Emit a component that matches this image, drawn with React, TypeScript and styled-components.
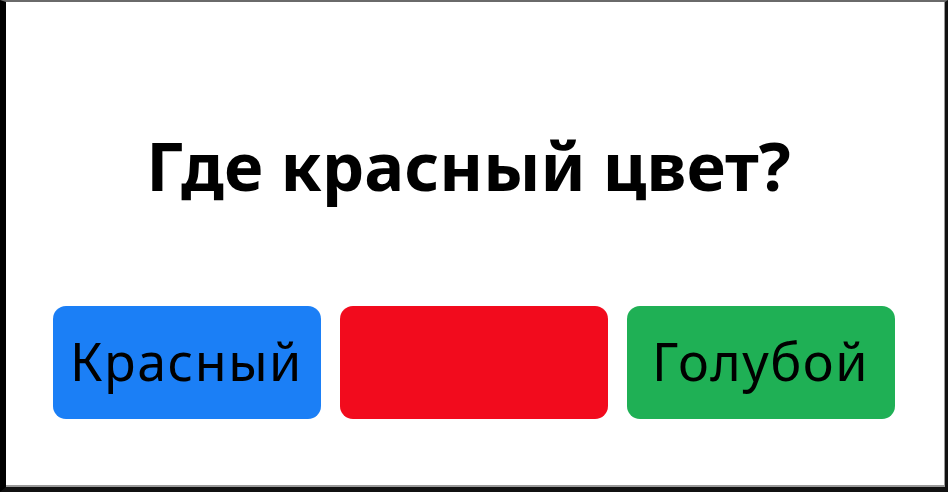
import React from "react";
import styled, { createGlobalStyle } from "styled-components";

const GlobalStyle = createGlobalStyle`
  html, body {
    margin: 0;
    padding: 0;
    background: #ffffff;
  }
  body {
    font-family: "Noto Sans", "Open Sans", sans-serif;
  }
`;

const options = [
  { label: "Красный", color: "#1b7ff6" },
  { label: "", color: "#f20b1d" },
  { label: "Голубой", color: "#1fb055" },
];

const App: React.FC = () => {
  return (
    <>
      <GlobalStyle />
      <Frame>
        <Question>Где красный цвет?</Question>
        <Answers>
          {options.map((option, i) => (
            <AnswerButton key={i} color={option.color}>
              {option.label}
            </AnswerButton>
          ))}
        </Answers>
      </Frame>
    </>
  );
};

export default App;

const Frame = styled.div`
  box-sizing: border-box;
  width: 948px;
  height: 492px;
  border-left: 6px solid #000;
  border-top: 2px solid #6a6a6a;
  border-right: 3px solid #111;
  border-bottom: 5px solid #111;
  box-shadow: inset -1px -2px 0 #9a9a9a;
  display: flex;
  flex-direction: column;
  align-items: center;
  padding-top: 120px;
`;

const Question = styled.h1`
  margin: 0 0 0 -14px;
  font-size: 67px;
  font-weight: 700;
  line-height: 86px;
  color: #000;
`;

const Answers = styled.div`
  display: flex;
  gap: 19px;
  margin-top: 98px;
  margin-left: -4px;
`;

const AnswerButton = styled.button<{ color: string }>`
  width: 268px;
  height: 113px;
  border: none;
  border-radius: 13px;
  background-color: ${(props) => props.color};
  color: #000;
  font-family: "Noto Sans", "Open Sans", sans-serif;
  font-size: 52px;
  font-weight: 400;
  letter-spacing: 1.5px;
  padding: 0 0 4px;
  cursor: pointer;
`;
